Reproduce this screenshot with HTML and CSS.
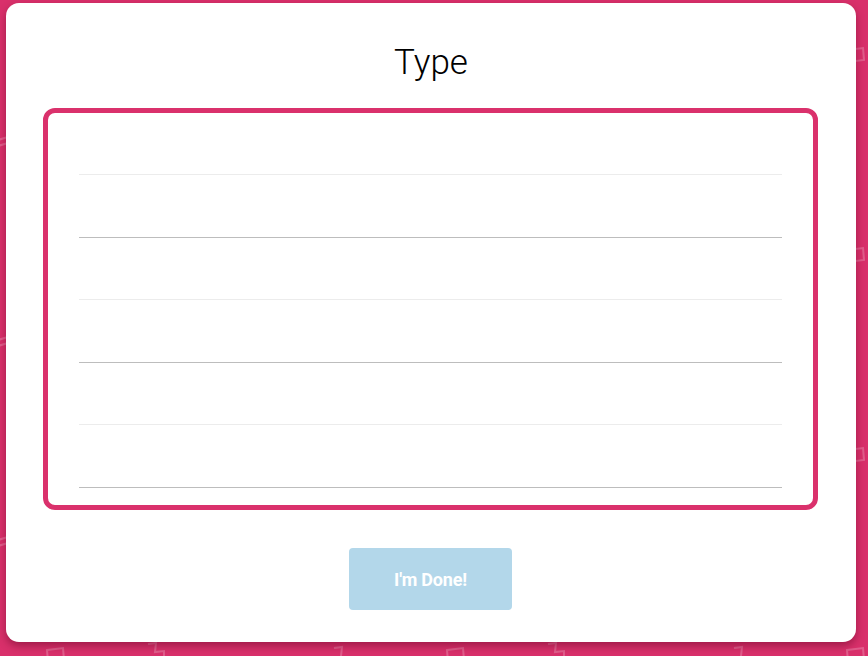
FILE: index.html
```html
<!DOCTYPE html>
<html lang="en">
<head>
<meta charset="utf-8">
<title>Type</title>
<link rel="stylesheet" href="styles.css">
</head>
<body>
<svg class="bg-pattern" width="868" height="656" aria-hidden="true">
  <defs>
    <pattern id="tiles" x="0" y="0" width="400" height="200" patternUnits="userSpaceOnUse">
      <g fill="none" stroke="#ffffff" stroke-opacity="0.22" stroke-width="2">
        <path d="M47 50 L63 48 L64 60 L48 62 Z"/>
        <path d="M148 44 L156 43 L155 52 L164 51 L164 58 L149 60"/>
        <path d="M334 48 L342 47 L341 56"/>
        <path d="M248 152 L262 150 L263 161 L249 163 Z"/>
        <path d="M-2 140 L8 137"/>
        <path d="M-2 146 L8 143"/>
      </g>
    </pattern>
  </defs>
  <rect width="868" height="656" fill="url(#tiles)"/>
</svg>
<main class="card">
  <h1 class="title">Type</h1>
  <section class="pad">
    <div class="row"><div class="half half-top"></div><div class="half half-bottom"></div></div>
    <div class="row"><div class="half half-top"></div><div class="half half-bottom"></div></div>
    <div class="row"><div class="half half-top"></div><div class="half half-bottom"></div></div>
  </section>
  <div class="actions">
    <button class="done-btn" type="button">I'm Done!</button>
  </div>
</main>
</body>
</html>
```

FILE: styles.css
```css
html, body {
  margin: 0;
  padding: 0;
}
body {
  width: 868px;
  height: 656px;
  background: #d9306b;
  font-family: Roboto, "Liberation Sans", sans-serif;
  overflow: hidden;
  position: relative;
}
.bg-pattern {
  position: absolute;
  left: 0;
  top: 0;
  z-index: 0;
}
.card {
  position: relative;
  z-index: 1;
  box-sizing: border-box;
  width: 850px;
  height: 639px;
  margin: 3px 0 0 6px;
  background: #ffffff;
  border-radius: 13px;
  box-shadow: 0 4px 8px rgba(90, 0, 30, 0.45);
  padding-top: 40px;
  display: flex;
  flex-direction: column;
}
.title {
  margin: 0;
  font-size: 35px;
  line-height: 40px;
  font-weight: 300;
  color: #000000;
  text-align: center;
}
.pad {
  box-sizing: border-box;
  margin: 25px 38px 0 37px;
  border: 5px solid #da316c;
  border-radius: 12px;
  padding: 0 31px 17px 31px;
  height: 402px;
}
.row {
  display: flex;
  flex-direction: column;
}
.half-top {
  height: 61px;
  border-bottom: 1px solid #ececec;
}
.half-bottom {
  height: 62px;
  border-bottom: 1px solid #bdbdbd;
}
.actions {
  display: flex;
  justify-content: center;
  margin-top: 38px;
  padding-right: 1px;
}
.done-btn {
  width: 163px;
  height: 62px;
  border: none;
  border-radius: 4px;
  background: #b3d7ea;
  color: #ffffff;
  font-family: Roboto, "Liberation Sans", sans-serif;
  font-size: 18px;
  font-weight: 700;
  letter-spacing: -0.2px;
  padding: 0;
  cursor: pointer;
}
```
